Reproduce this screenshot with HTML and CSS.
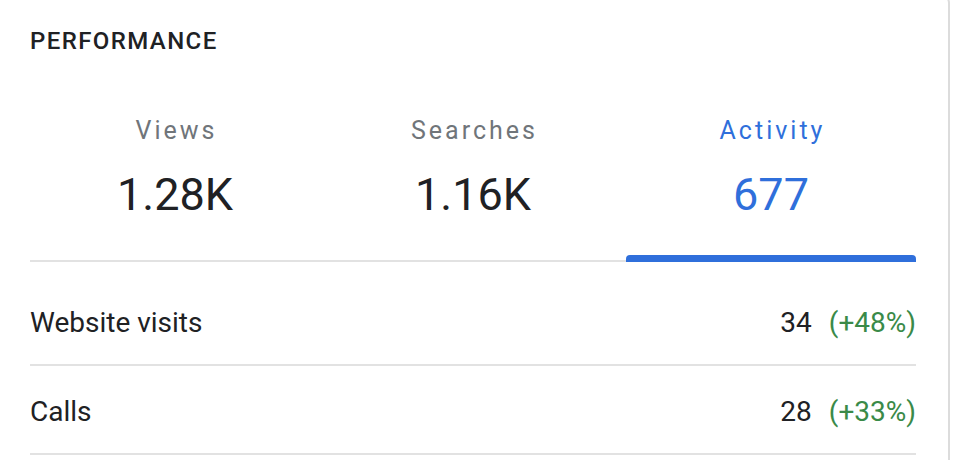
FILE: index.html
```html
<!DOCTYPE html>
<html lang="en">
<head>
<meta charset="utf-8">
<title>Performance</title>
<link rel="stylesheet" href="styles.css">
</head>
<body>
<section class="card">
  <h2 class="title">PERFORMANCE</h2>
  <div class="tabs">
    <div class="tab">
      <div class="tab-label">Views</div>
      <div class="tab-value">1.28K</div>
      <div class="indicator"></div>
    </div>
    <div class="tab">
      <div class="tab-label">Searches</div>
      <div class="tab-value">1.16K</div>
      <div class="indicator"></div>
    </div>
    <div class="tab tab-active">
      <div class="tab-label">Activity</div>
      <div class="tab-value">677</div>
      <div class="indicator"></div>
    </div>
  </div>
  <ul class="rows">
    <li class="row">
      <span class="row-name">Website visits</span>
      <span class="row-stat"><span class="row-num">34</span><span class="row-change">(+48%)</span></span>
    </li>
    <li class="row">
      <span class="row-name">Calls</span>
      <span class="row-stat"><span class="row-num">28</span><span class="row-change">(+33%)</span></span>
    </li>
  </ul>
</section>
</body>
</html>
```
FILE: styles.css
```css
html, body {
  margin: 0;
  padding: 0;
  background: #ffffff;
}

body {
  font-family: Roboto, "Liberation Sans", Arial, sans-serif;
  color: #202124;
  overflow: hidden;
}

.card {
  margin: -6px 10px 0 -20px;
  padding: 31px 32px 0 48px;
  border: 2px solid #dcdcdc;
  border-radius: 9px;
  background: #ffffff;
  min-height: 480px;
  box-sizing: border-box;
}

.title {
  margin: 0;
  font-size: 24px;
  line-height: 28px;
  font-weight: 500;
  letter-spacing: 1.4px;
  color: #202124;
}

.tabs {
  margin-top: 61px;
  display: grid;
  grid-template-columns: 1fr 1fr 1fr;
  column-gap: 8px;
  border-bottom: 2px solid #e2e2e2;
}

.tab {
  display: flex;
  flex-direction: column;
  align-items: center;
}

.tab-label {
  font-size: 25px;
  line-height: 30px;
  letter-spacing: 3px;
  text-indent: 3px;
  color: #70757a;
}

.tab-value {
  margin-top: 23px;
  font-size: 45px;
  line-height: 52px;
  color: #202124;
}

.indicator {
  margin-top: auto;
  align-self: stretch;
  height: 34px;
}

.tab-active .tab-label,
.tab-active .tab-value {
  color: #2f6fdb;
}

.tab-active .indicator {
  height: 7px;
  margin-top: 34px;
  margin-bottom: -2px;
  background: #2f6fdb;
  border-radius: 4px 4px 0 0;
}

.rows {
  list-style: none;
  margin: 0;
  padding: 15px 0 0;
}

.row {
  display: flex;
  justify-content: space-between;
  align-items: center;
  padding: 30px 0 25px;
  border-bottom: 2px solid #e2e2e2;
  font-size: 28px;
  line-height: 32px;
}

.row-name {
  color: #202124;
}

.row-stat {
  display: flex;
  align-items: center;
}

.row-num {
  color: #202124;
}

.row-change {
  margin-left: 17px;
  color: #3a8a48;
}
```
